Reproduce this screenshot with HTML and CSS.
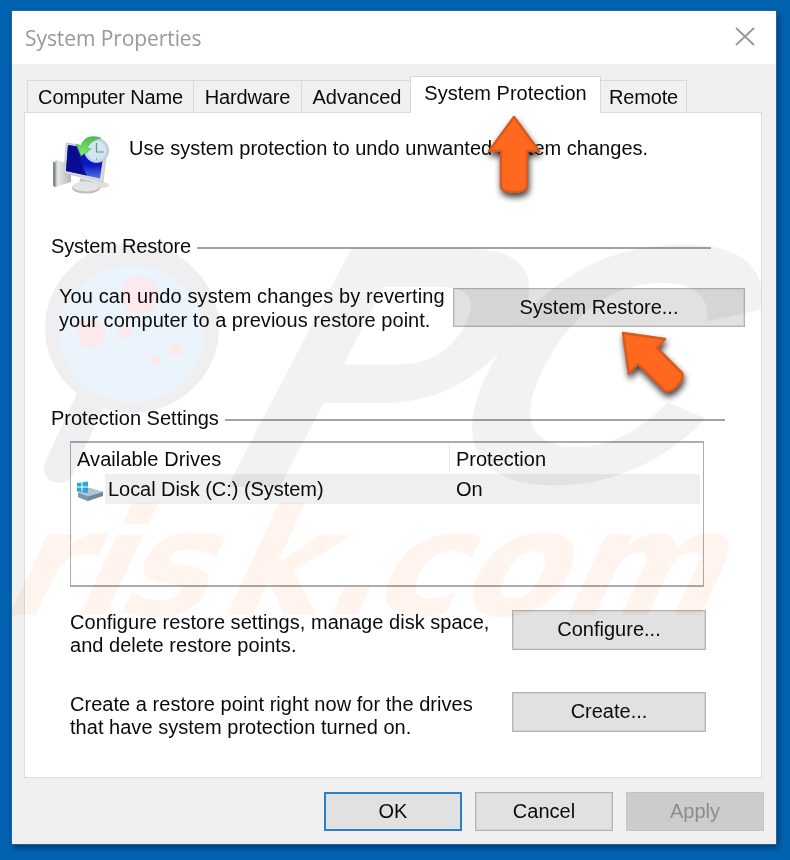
FILE: index.html
```html
<!DOCTYPE html>
<html lang="en">
<head>
<meta charset="utf-8">
<title>System Properties</title>
<link rel="stylesheet" href="styles.css">
</head>
<body>
<div class="window">
	<div class="titlebar">
		<h1>System Properties</h1>
		<svg class="close" width="20" height="20" viewBox="0 0 20 20"><path d="M1 1L19 18M19 1L1 18" fill="none" stroke="#979797" stroke-width="1.8"/></svg>
	</div>
	<div class="tabs">
		<div class="tab t1">Computer Name</div>
		<div class="tab t2">Hardware</div>
		<div class="tab t3">Advanced</div>
		<div class="tab t4 current">System Protection</div>
		<div class="tab t5">Remote</div>
	</div>
	<div class="panel">
		<div class="intro">
			<svg width="60" height="60" viewBox="0 0 60 60">
				<defs>
					<linearGradient id="scr" x1="0" y1="0" x2="0" y2="1"><stop offset="0" stop-color="#0a12a4"/><stop offset=".6" stop-color="#0b18c4"/><stop offset="1" stop-color="#5273e4"/></linearGradient>
					<linearGradient id="met" x1="0" y1="0" x2="1" y2="0"><stop offset="0" stop-color="#a2a4a6"/><stop offset=".3" stop-color="#e6e7e8"/><stop offset="1" stop-color="#b3b5b7"/></linearGradient>
					<linearGradient id="grn" x1="0" y1="0" x2="0" y2="1"><stop offset="0" stop-color="#4fbb4d"/><stop offset="1" stop-color="#85ee70"/></linearGradient>
				</defs>
				<ellipse cx="43" cy="50" rx="15" ry="4" fill="#000" opacity=".13"/>
				<path d="M2 27L6 25L20 30V47L5 52L2 51Z" fill="url(#met)"/>
				<path d="M2 27L4.500 28V52L2 51Z" fill="#85878a"/>
				<path d="M2.500 28L4.500 29V32L2.500 31Z" fill="#6ab35d"/>
				<path d="M29 43L42 46L40 53H28Z" fill="#c2c4c6"/>
				<ellipse cx="35" cy="53" rx="14" ry="5.500" fill="#bbbdbf"/>
				<ellipse cx="35" cy="51.500" rx="13.500" ry="5" fill="#e2e3e4"/>
				<path d="M15 8L56 14L52 47L13 38Z" fill="#d6d8da" stroke="#bcbec0" stroke-width=".7"/>
				<path d="M17 10L53 15L49 43.500L15 36Z" fill="url(#scr)"/>
				<path d="M17 10L27 12Q29 30 36 40.500L15 36Z" fill="#080c92"/>
				<circle cx="45.500" cy="15.500" r="12" fill="#c4d9e5" stroke="#b1bdc4"/>
				<circle cx="45.500" cy="15.500" r="9.500" fill="#d3e5ef"/>
				<path d="M45.500 8V17H53" fill="none" stroke="#6c8ca6" stroke-width="1.200"/>
				<path d="M45.500 23v2M37 17h-1" stroke="#8fa9ba"/>
				<path d="M50 3Q34-2 30 11L25 9L30 21L40 14L36 13Q40 5 50 3Z" fill="url(#grn)" stroke="#4aac49" stroke-width=".6"/>
			</svg>
			<p>Use system protection to undo unwanted system changes.</p>
		</div>

		<div class="legend"><h2>System Restore</h2><i></i></div>
		<div class="restore">
			<p>You can undo system changes by reverting<br><span>your computer to a previous restore point.</span></p>
			<button class="btn wide">System Restore...</button>
		</div>

		<div class="legend settings"><h2>Protection Settings</h2><i></i></div>
		<div class="list">
			<div class="row head"><span class="drive">Available Drives</span><span class="state">Protection</span></div>
			<div class="row item">
				<svg width="28" height="20" viewBox="0 0 28 20">
					<path d="M1 12L12 7L26 11V15L11 20L1 16Z" fill="#6f8798"/>
					<path d="M1 12L12 7L26 11L11 15.500Z" fill="#b3c5d2"/>
					<path d="M1 12L11 15.500V20L1 16Z" fill="#8097a7"/>
					<path d="M0 2L4.500 1.400V5.500H0ZM5.500 1.200L11 .5V5.500H5.500ZM0 6.500H4.500V11L0 10.500ZM5.500 6.500H11V12L5.500 11.200Z" fill="#27a9dc"/>
				</svg>
				<span class="drive">Local Disk (C:) (System)</span><span class="state">On</span>
			</div>
		</div>

		<div class="action">
			<p>Configure restore settings, manage disk space,<br>and delete restore points.</p>
			<button class="btn">Configure...</button>
		</div>
		<div class="action">
			<p>Create a restore point right now for the drives<br>that have system protection turned on.</p>
			<button class="btn">Create...</button>
		</div>
	</div>
	<div class="footer">
		<button class="btn ok">OK</button>
		<button class="btn">Cancel</button>
		<button class="btn off" disabled>Apply</button>
	</div>
</div>

<!-- watermark -->
<svg class="mark" width="790" height="860" viewBox="0 0 790 860">
	<g opacity=".07">
		<path d="M96 388L59 468" stroke="#202838" stroke-width="30" stroke-linecap="round"/>
		<ellipse cx="132" cy="328" rx="87" ry="85" fill="#202838"/>
	</g>
	<ellipse cx="132" cy="334" rx="72" ry="68" fill="#ebf4fc"/>
	<g fill="#fbe9ec">
		<circle cx="140" cy="295" r="19"/><circle cx="91" cy="334" r="14"/><circle cx="125" cy="332" r="7"/><circle cx="176" cy="350" r="7"/><circle cx="155" cy="361" r="5"/>
	</g>
	<g class="pc">
		<text transform="matrix(1.05 0 -.52 1 203 487)">P</text>
		<text transform="matrix(1.07 0 -.52 .98 414 482)">C</text>
	</g>
	<text class="risk" transform="matrix(1 0 -.46 .98 0 615)" x="-3 67 112 214 316 366 453 556">risk.com</text>
</svg>

<svg class="arrow up" width="70" height="94" viewBox="0 0 70 94"><path d="M34 8L59 42H47V78Q45 83 34 83Q23 83 21 78V42H9Z"/></svg>
<svg class="arrow left" width="80" height="80" viewBox="0 0 80 80"><path d="M11 11L53 17L45 26L70 51Q72 56 66 63Q59 71 53 69L26 42L17 52Z"/></svg>
</body>
</html>
```
FILE: styles.css
```css
*{margin:0;padding:0;box-sizing:border-box;}
body{width:790px;height:860px;overflow:hidden;position:relative;background:#0063b1;font:20px/23.5px "Liberation Sans",Arial,sans-serif;color:#0b0b0b;}
h1,h2{font-weight:normal;font-size:inherit;}
p,h1,h2,span,.tab{white-space:nowrap;}
.window{width:764px;height:833px;margin:11px 0 0 12px;background:#f0f0f0;box-shadow:0 0 0 1px #20649b,2px 3px 7px rgba(0,20,50,.6);display:flow-root;}
.titlebar{height:53px;background:#fff;display:flex;justify-content:space-between;align-items:center;padding:0 21px 0 13px;}
.titlebar h1{font:21px/30px "Open Sans","Noto Sans",sans-serif;color:#999;letter-spacing:-.08px;}
.close{display:block;margin-top:-1px;}

/* tabs */
.tabs{height:48px;padding:12px 0 0 15px;display:flex;align-items:flex-end;}
.tab{height:32px;line-height:33px;text-align:center;letter-spacing:-.15px;border:1px solid #d9d9d9;border-width:1px 1px 0 0;}
.t1{width:167px;border-left-width:1px;}
.t2{width:108px;}
.t3{width:108px;padding-left:2px;border-right:0;letter-spacing:0;}
.t4{width:191px;}
.t5{width:86px;}
.tab.current{height:37px;line-height:33px;letter-spacing:0;background:#fff;border-left-width:1px;margin-bottom:-1px;position:relative;}
.panel{width:738px;height:666px;margin-left:12px;background:#fff;border:1px solid #dcdcdc;padding-left:26px;}

.intro{height:122px;display:flex;padding-top:22px;}
.intro p{margin-left:18px;padding-top:2px;letter-spacing:.02px;}
.legend{height:24px;width:660px;display:flex;align-items:center;gap:6px;}
.legend h2{letter-spacing:-.17px;}
.legend i{flex:1;height:2px;background:#a3a3a3;margin-top:1px;}
.settings{width:674px;}
.settings h2{letter-spacing:0;}
.restore{height:148px;display:flex;justify-content:space-between;padding:29px 16px 0 8px;}
.restore p{margin-top:-3px;letter-spacing:.1px;}
.restore span{letter-spacing:.03px;}

/* drives list */
.list{width:634px;height:146px;margin:10px 0 0 19px;border:2px solid #acadb0;border-left-width:1px;border-right-width:1px;padding:1px 3px 0 6px;}
.row{display:flex;height:30px;line-height:31px;}
.head .drive{width:373px;border-right:1px solid #e8e8e8;height:28px;line-height:30px;letter-spacing:.08px;}
.head .state{padding-left:6px;line-height:30px;}
.item svg{margin-top:7px;}
.item .drive{width:345px;padding-left:3px;background:#efefef;letter-spacing:-.05px;}
.item .state{flex:1;padding-left:6px;background:#efefef;}

.action{width:636px;height:47px;margin:23px 0 0 19px;display:flex;justify-content:space-between;}
.action p{letter-spacing:.03px;padding-top:.5px;}
.action+.action{margin-top:35px;}
.btn{width:194px;height:40px;background:#e1e1e1;border:1px solid #b3b3b3;box-shadow:inset 0 0 0 1px #d2d2d2;font:inherit;color:#0b0b0b;}
.wide{width:292px;height:39px;}
.footer{display:flex;justify-content:flex-end;gap:13px;padding:14px 12px 0 0;}
.footer .btn{width:138px;height:39px;}
.footer .ok{border:2px solid #2c80c8;box-shadow:none;}
.footer .off{background:#ccc;border-color:#c3c3c3;box-shadow:none;color:#8c8c8c;}

.mark{position:absolute;left:0;top:0;mix-blend-mode:multiply;pointer-events:none;}
.pc{font:bold 347px "Liberation Sans",Arial,sans-serif;fill:#000;opacity:.05;}
.risk{font:bold 150px "DejaVu Sans",sans-serif;fill:#ff6414;opacity:.07;}
.arrow{position:absolute;overflow:visible;}
.arrow path{fill:#ff681f;stroke:#d85a1c;stroke-width:2.5;stroke-linejoin:round;filter:drop-shadow(1px 4px 3px rgba(0,0,0,.75));}
.up{left:480px;top:109px;}
.left{left:612px;top:322px;}
```
